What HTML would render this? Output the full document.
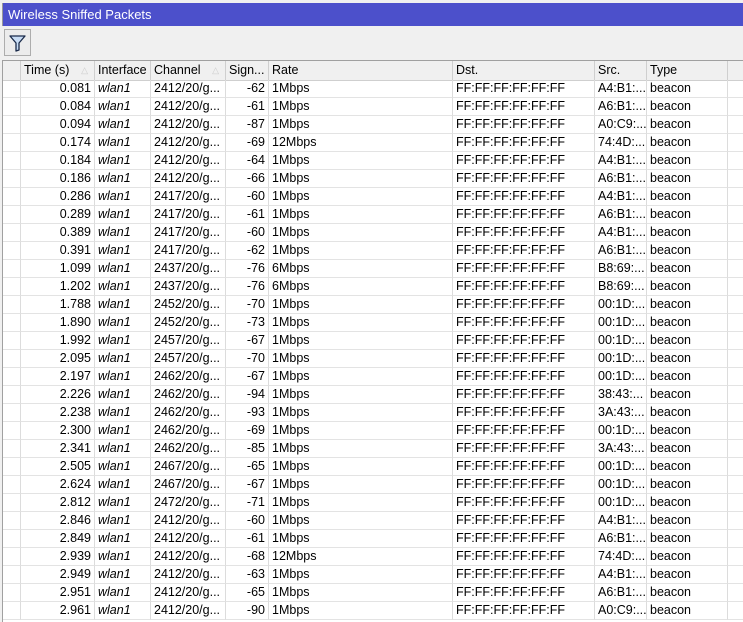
<!DOCTYPE html>
<html><head><meta charset="utf-8"><style>
*{margin:0;padding:0;box-sizing:border-box}
body{width:743px;height:622px;overflow:hidden;background:#f0f0f0;font-family:"Liberation Sans",Arial,sans-serif;font-size:12.5px;color:#000;position:relative}
#title{position:absolute;left:2px;top:3px;width:741px;height:23px;background:#4c50cb;color:#fff;font-size:13px;line-height:23px;padding-left:5px;border-left:1px solid #999}
#tb{position:absolute;left:2px;top:26px;width:741px;height:33px;background:#f0f0f0}
#btn{position:absolute;left:4px;top:29px;width:27px;height:27px;border:1px solid #adadad;background:#ececec}
#grid{position:absolute;left:2px;top:60px;width:741px;height:562px;background:#fff;border-left:1px solid #a0a0a0;border-top:1px solid #a0a0a0}
.r{position:absolute;left:0;height:18px;width:741px}
.c{position:absolute;top:0;height:18px;line-height:17px;border-right:1px solid #dcdcdc;border-bottom:1px solid #e3e3e3;padding:0 3px;white-space:nowrap;overflow:hidden}
.h .c{background:#f0f0f0;border-right:1px solid #cfcfcf;border-bottom:1px solid #cfcfcf;height:20px;line-height:19px}
.rt{text-align:right}
.it{font-style:italic}
.ar{color:#ccc;font-size:9px;position:absolute;right:6px;top:0}
</style></head><body>
<div id="title">Wireless Sniffed Packets</div>
<div id="tb"></div>
<div id="btn"><svg width="25" height="25" viewBox="0 0 25 25"><path d="M5 6 H20 L14 13 V20 L11 21 V13 Z" fill="#c8dcf4" stroke="#1a2a4a" stroke-width="1.3" stroke-linejoin="round"/></svg></div>
<div id="grid">
<div class="r h" style="top:0">
<div class="c" style="left:0;width:18px"></div>
<div class="c" style="left:18px;width:74px">Time (s)<span class="ar">&#9651;</span></div>
<div class="c" style="left:92px;width:56px">Interface</div>
<div class="c" style="left:148px;width:75px">Channel<span class="ar">&#9651;</span></div>
<div class="c" style="left:223px;width:43px">Sign...</div>
<div class="c" style="left:266px;width:184px">Rate</div>
<div class="c" style="left:450px;width:142px">Dst.</div>
<div class="c" style="left:592px;width:52px">Src.</div>
<div class="c" style="left:644px;width:81px">Type</div>
<div class="c" style="left:725px;width:16px;border-right:none"></div>
</div>
<div id="rows"></div>
</div>
<script>
var d=[["0.081","2412","-62","1Mbps","A4:B1:..."],["0.084","2412","-61","1Mbps","A6:B1:..."],["0.094","2412","-87","1Mbps","A0:C9:..."],["0.174","2412","-69","12Mbps","74:4D:..."],["0.184","2412","-64","1Mbps","A4:B1:..."],["0.186","2412","-66","1Mbps","A6:B1:..."],["0.286","2417","-60","1Mbps","A4:B1:..."],["0.289","2417","-61","1Mbps","A6:B1:..."],["0.389","2417","-60","1Mbps","A4:B1:..."],["0.391","2417","-62","1Mbps","A6:B1:..."],["1.099","2437","-76","6Mbps","B8:69:..."],["1.202","2437","-76","6Mbps","B8:69:..."],["1.788","2452","-70","1Mbps","00:1D:..."],["1.890","2452","-73","1Mbps","00:1D:..."],["1.992","2457","-67","1Mbps","00:1D:..."],["2.095","2457","-70","1Mbps","00:1D:..."],["2.197","2462","-67","1Mbps","00:1D:..."],["2.226","2462","-94","1Mbps","38:43:..."],["2.238","2462","-93","1Mbps","3A:43:..."],["2.300","2462","-69","1Mbps","00:1D:..."],["2.341","2462","-85","1Mbps","3A:43:..."],["2.505","2467","-65","1Mbps","00:1D:..."],["2.624","2467","-67","1Mbps","00:1D:..."],["2.812","2472","-71","1Mbps","00:1D:..."],["2.846","2412","-60","1Mbps","A4:B1:..."],["2.849","2412","-61","1Mbps","A6:B1:..."],["2.939","2412","-68","12Mbps","74:4D:..."],["2.949","2412","-63","1Mbps","A4:B1:..."],["2.951","2412","-65","1Mbps","A6:B1:..."],["2.961","2412","-90","1Mbps","A0:C9:..."]];
var h="";
d.forEach(function(r,i){
h+='<div class="r" style="top:'+(19+i*18)+'px">'+
'<div class="c" style="left:0;width:18px"></div>'+
'<div class="c rt" style="left:18px;width:74px">'+r[0]+'</div>'+
'<div class="c it" style="left:92px;width:56px">wlan1</div>'+
'<div class="c" style="left:148px;width:75px">'+r[1]+'/20/g...</div>'+
'<div class="c rt" style="left:223px;width:43px">'+r[2]+'</div>'+
'<div class="c" style="left:266px;width:184px">'+r[3]+'</div>'+
'<div class="c" style="left:450px;width:142px">FF:FF:FF:FF:FF:FF</div>'+
'<div class="c" style="left:592px;width:52px">'+r[4]+'</div>'+
'<div class="c" style="left:644px;width:81px">beacon</div>'+
'<div class="c" style="left:725px;width:16px;border-right:none"></div>'+
'</div>';});
document.getElementById("rows").innerHTML=h;
</script>
</body></html>
